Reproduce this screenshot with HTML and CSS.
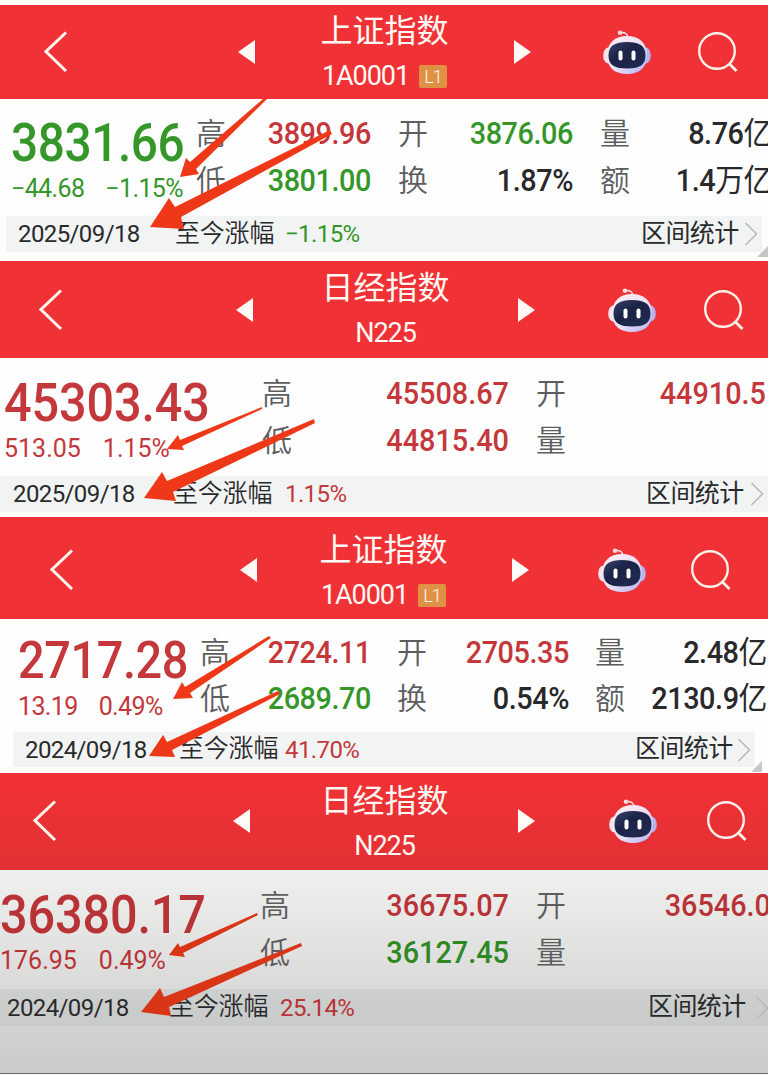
FILE: index.html
```
<!DOCTYPE html>
<html lang="zh-CN">
  <head>
    <meta charset="UTF-8" />
    <meta name="viewport" content="width=device-width, initial-scale=1.0" />
    <title>指数对比</title>
    <link rel="stylesheet" href="styles.css">
  </head>
  <body>
    <!-- shared icons -->
    <svg class="defs" width="0" height="0">
      <defs>
        <linearGradient id="shell" x1="0" y1="0" x2="1" y2="1">
          <stop offset="0" stop-color="#fff0f3" />
          <stop offset="0.55" stop-color="#eadff5" />
          <stop offset="1" stop-color="#aeb0f5" />
        </linearGradient>
        <linearGradient id="face" x1="0" y1="0" x2="1" y2="1">
          <stop offset="0" stop-color="#39436b" />
          <stop offset="0.4" stop-color="#1b2447" />
          <stop offset="1" stop-color="#212a50" />
        </linearGradient>
      </defs>
      <symbol id="icon-back" viewBox="0 0 24 42">
        <path d="M22 1.5 2 20.5 22 40" fill="none" stroke="#fff5ee" stroke-width="3" />
      </symbol>
      <symbol id="icon-prev" viewBox="0 0 17 24">
        <path d="M17 0v24L0 12z" fill="#fffaf5" />
      </symbol>
      <symbol id="icon-next" viewBox="0 0 17 24">
        <path d="M0 0v24l17-12z" fill="#fffaf5" />
      </symbol>
      <symbol id="icon-robot" viewBox="0 0 48 44">
        <path d="M17 2.5c5-.5 7.500 1 8 5" fill="none" stroke="#ffe1e4" stroke-width="1.500" />
        <circle cx="17" cy="2.800" r="2.300" fill="#ffd9dc" />
        <ellipse cx="5.500" cy="25.500" rx="5.300" ry="8" fill="#f6e4ec" />
        <ellipse cx="42.500" cy="25.500" rx="5.300" ry="8" fill="#b9b0ee" />
        <path d="M24 6c12 0 20 7 20 19 0 13-8 19-20 19S4 38 4 25C4 13 12 6 24 6z" fill="url(#shell)" />
        <path d="M24 12c12 0 18.500 3.500 18.500 13.500S36 38.500 24 38.500 5.500 35.500 5.500 25.500 12 12 24 12z" fill="url(#face)" />
        <rect x="15.500" y="20.500" width="4" height="10" rx="2" fill="#fff" />
        <rect x="28.500" y="20.500" width="4" height="10" rx="2" fill="#fff" />
      </symbol>
      <symbol id="icon-search" viewBox="0 0 40 40">
        <circle cx="19" cy="19" r="17.800" fill="none" stroke="#fff1e8" stroke-width="2.400" />
        <path d="M31.500 32l7 7" stroke="#fff1e8" stroke-width="2.800" />
      </symbol>
      <symbol id="icon-more" viewBox="0 0 14 24">
        <path d="M1.500 1 12.500 12 1.500 23" fill="none" stroke="#b9bbbb" stroke-width="1.600" />
      </symbol>
    </svg>

    <section class="panel sse-2025">
      <header class="bar">
        <svg class="back"><use href="#icon-back" /></svg>
        <svg class="step"><use href="#icon-prev" /></svg>
        <div class="title">
          <h2>上证指数</h2>
          <p>1A0001 <span class="level">L1</span></p>
        </div>
        <svg class="step"><use href="#icon-next" /></svg>
        <svg class="robot"><use href="#icon-robot" /></svg>
        <svg class="search"><use href="#icon-search" /></svg>
      </header>
      <div class="quote">
        <div class="summary down">
          <div class="price">3831.66</div>
          <div class="change"><span>−44.68</span><span>−1.15%</span></div>
        </div>
        <span class="label">高</span><span class="value up">3899.96</span>
        <span class="label next">开</span><span class="value down">3876.06</span>
        <span class="label next">量</span><span class="value">8.76<small>亿</small></span>
        <span class="label">低</span><span class="value down">3801.00</span>
        <span class="label next">换</span><span class="value">1.87%</span>
        <span class="label next">额</span><span class="value">1.4<small>万亿</small></span>
      </div>
      <div class="range">
        <span class="date">2025/09/18</span>
        <span class="since">至今涨幅</span>
        <span class="rate down">−1.15%</span>
        <span class="stats">区间统计</span>
        <svg class="more"><use href="#icon-more" /></svg>
      </div>
      <i class="corner"></i>
    </section>

    <section class="panel nikkei nikkei-2025">
      <header class="bar">
        <svg class="back"><use href="#icon-back" /></svg>
        <svg class="step"><use href="#icon-prev" /></svg>
        <div class="title">
          <h2>日经指数</h2>
          <p>N225</p>
        </div>
        <svg class="step"><use href="#icon-next" /></svg>
        <svg class="robot"><use href="#icon-robot" /></svg>
        <svg class="search"><use href="#icon-search" /></svg>
      </header>
      <div class="quote">
        <div class="summary up">
          <div class="price">45303.43</div>
          <div class="change"><span>513.05</span><span>1.15%</span></div>
        </div>
        <span class="label">高</span><span class="value up">45508.67</span>
        <span class="label next">开</span><span class="value up">44910.5</span>
        <span class="label">低</span><span class="value up">44815.40</span>
        <span class="label next">量</span><span class="value"></span>
      </div>
      <div class="range">
        <span class="date">2025/09/18</span>
        <span class="since">至今涨幅</span>
        <span class="rate up">1.15%</span>
        <span class="stats">区间统计</span>
        <svg class="more"><use href="#icon-more" /></svg>
      </div>
    </section>

    <section class="panel sse-2024">
      <header class="bar">
        <svg class="back"><use href="#icon-back" /></svg>
        <svg class="step"><use href="#icon-prev" /></svg>
        <div class="title">
          <h2>上证指数</h2>
          <p>1A0001 <span class="level">L1</span></p>
        </div>
        <svg class="step"><use href="#icon-next" /></svg>
        <svg class="robot"><use href="#icon-robot" /></svg>
        <svg class="search"><use href="#icon-search" /></svg>
      </header>
      <div class="quote">
        <div class="summary up">
          <div class="price">2717.28</div>
          <div class="change"><span>13.19</span><span>0.49%</span></div>
        </div>
        <span class="label">高</span><span class="value up">2724.11</span>
        <span class="label next">开</span><span class="value up">2705.35</span>
        <span class="label next">量</span><span class="value">2.48<small>亿</small></span>
        <span class="label">低</span><span class="value down">2689.70</span>
        <span class="label next">换</span><span class="value">0.54%</span>
        <span class="label next">额</span><span class="value">2130.9<small>亿</small></span>
      </div>
      <div class="range">
        <span class="date">2024/09/18</span>
        <span class="since">至今涨幅</span>
        <span class="rate up">41.70%</span>
        <span class="stats">区间统计</span>
        <svg class="more"><use href="#icon-more" /></svg>
      </div>
      <i class="corner"></i>
    </section>

    <section class="panel nikkei nikkei-2024">
      <header class="bar">
        <svg class="back"><use href="#icon-back" /></svg>
        <svg class="step"><use href="#icon-prev" /></svg>
        <div class="title">
          <h2>日经指数</h2>
          <p>N225</p>
        </div>
        <svg class="step"><use href="#icon-next" /></svg>
        <svg class="robot"><use href="#icon-robot" /></svg>
        <svg class="search"><use href="#icon-search" /></svg>
      </header>
      <div class="quote">
        <div class="summary up">
          <div class="price">36380.17</div>
          <div class="change"><span>176.95</span><span>0.49%</span></div>
        </div>
        <span class="label">高</span><span class="value up">36675.07</span>
        <span class="label next">开</span><span class="value up">36546.0</span>
        <span class="label">低</span><span class="value down">36127.45</span>
        <span class="label next">量</span><span class="value"></span>
      </div>
      <div class="range">
        <span class="date">2024/09/18</span>
        <span class="since">至今涨幅</span>
        <span class="rate up">25.14%</span>
        <span class="stats">区间统计</span>
        <svg class="more"><use href="#icon-more" /></svg>
      </div>
    </section>

    <!-- hand-drawn arrows over the quotes -->
    <svg class="arrows" viewBox="0 0 768 1075">
      <path d="M180 177 186 158 190 162 263 99 267 99 196 169 199 174z" />
      <path d="M150 227 169 198 175 207 330 130 332 134 181 217 184 229z" />
      <path d="M167 449 178 435 180 440 262 407 262 409 182 446 184 450z" />
      <path d="M144 498 162 472 167 481 314 419 315 423 173 492 176 501z" />
      <path d="M173 699 182 682 185 687 269 636 271 638 190 693 193 698z" />
      <path d="M149 756 163 735 167 742 278 691 280 694 172 750 175 757z" />
      <g class="dim">
        <path d="M169 955 178 943 180 947 257 913 258 915 183 953 185 957z" />
        <path d="M141 1012 160 988 164 997 301 943 302 946 169 1007 171 1016z" />
      </g>
    </svg>
  </body>
</html>
```
FILE: styles.css
```
* {
  box-sizing: border-box;
}
body {
  position: relative;
  width: 768px;
  height: 1075px;
  margin: 0;
  padding-top: 5px;
  overflow: hidden;
  background: #fefefe;
  color: #29292b;
  font-family: Roboto, "Noto Sans CJK SC", sans-serif;
  white-space: nowrap;
}
.defs {
  position: absolute;
}
svg {
  display: block;
}
.panel {
  position: relative;
  height: 256px;
  overflow: hidden;
}
.up {
  color: #c4373b;
}
.down {
  color: #35962a;
}

/* red title bar */
.bar {
  display: grid;
  align-items: center;
  height: 97px;
  background: #f03236;
  color: #fff8f3;
}
.back {
  width: 24px;
  height: 42px;
}
.step {
  width: 17px;
  height: 24px;
}
.robot {
  width: 48px;
  height: 44px;
}
.search {
  width: 40px;
  height: 40px;
}
.title {
  width: 129px;
  padding-top: 2px;
  text-align: center;
}
.title h2 {
  margin: 0;
  font-size: 32px;
  font-weight: 400;
  line-height: 46px;
}
.title p {
  display: flex;
  justify-content: center;
  align-items: center;
  gap: 10px;
  margin: 0;
  font-size: 27px;
  line-height: 45px;
  letter-spacing: -0.04em;
}
.level {
  width: 28px;
  height: 23px;
  border-radius: 2px;
  background: #df9145;
  font-size: 18px;
  font-weight: 300;
  line-height: 24px;
}

/* prices */
.quote {
  display: grid;
  align-content: start;
  height: 118px;
  grid-auto-rows: 47px;
  line-height: 47px;
}
.summary {
  grid-row: span 2;
}
.price {
  font-size: 53px;
  font-weight: 500;
  line-height: 56px;
  letter-spacing: -0.008em;
  transform: scaleX(0.9);
  transform-origin: left;
}
.change {
  display: flex;
  gap: 21px;
  margin-top: 4px;
  font-size: 25px;
  line-height: 30px;
  letter-spacing: -0.025em;
}
.label {
  color: #5d5d60;
  font-size: 30px;
  font-weight: 350;
}
.next {
  padding-left: 27px;
}
.value {
  font-size: 31px;
  font-weight: 500;
  letter-spacing: -0.015em;
  text-align: right;
  transform: scaleX(0.93);
  transform-origin: right;
}
.value small {
  font-size: 31px;
  font-weight: 400;
}

/* date range strip */
.range {
  display: grid;
  align-items: center;
  height: 36px;
  background: #f2f3f3;
  font-size: 24px;
  letter-spacing: -0.025em;
}
.since,
.stats {
  padding-bottom: 1px;
  font-size: 25px;
  line-height: 32px;
  letter-spacing: -0.2px;
}
.since {
  font-weight: 350;
}
.stats {
  letter-spacing: -0.6px;
}
.more {
  width: 14px;
  height: 24px;
}
.corner {
  position: absolute;
  right: 0;
  bottom: 4px;
  border-left: 11px solid transparent;
  border-bottom: 11px solid #c6c7c7;
}

.sse-2025 .bar {
  height: 94px;
  padding-left: 44px;
  grid-template-columns: 194px 82px 194px 89px 95px 40px;
}
.sse-2025 .quote {
  height: 117px;
  padding: 11px 0 0 11px;
  grid-template-columns: 185px 30px 145px 57px 145px 57px 142px;
}
.sse-2025 .summary {
  padding-top: 5px;
}
.sse-2025 .change {
  margin-top: 3px;
}
.sse-2025 .range {
  margin: 0 6px;
  padding-left: 12px;
  grid-template-columns: 157px 110px 356px 103px 14px;
}

.nikkei-2025 .bar {
  padding-left: 39px;
  grid-template-columns: 197px 85px 197px 90px 96px 40px;
}
.nikkei-2025 .quote {
  padding: 12px 0 0 4px;
  grid-template-columns: 258px 30px 217px 57px 200px;
}
.nikkei .price {
  margin-top: 5px;
  font-size: 54px;
  letter-spacing: -0.003em;
}
.nikkei .value {
  letter-spacing: 0;
}
.nikkei .change {
  margin-top: 3px;
  gap: 22px;
  letter-spacing: 0;
}
.nikkei-2025 .range {
  padding-left: 13px;
  grid-template-columns: 160px 112px 361px 104px 14px;
}

.sse-2024 .bar {
  height: 102px;
  padding: 4px 0 0 50px;
  grid-template-columns: 190px 79px 193px 86px 93px 40px;
}
.sse-2024 .title {
  padding-top: 5px;
}
.sse-2024 .quote {
  height: 113px;
  padding: 11px 0 0 18px;
  grid-template-columns: 182px 30px 141px 57px 141px 53px 145px;
  grid-auto-rows: 46px;
  line-height: 46px;
}
.sse-2024 .next {
  padding-left: 26px;
}
.sse-2024 .price {
  font-size: 52px;
  margin-top: 3px;
}
.sse-2024 .change {
  margin-top: 3px;
}
.sse-2024 .range {
  margin: 0 13px;
  padding-left: 12px;
  height: 35px;
  grid-template-columns: 154px 106px 350px 102px 14px;
}
.sse-2024 .corner {
  right: 6px;
  bottom: 1px;
}

.nikkei-2024 {
  height: 301px;
  background: linear-gradient(#f0f0ef 97px, #cacaca);
  border-bottom: 1px solid #67646a;
}
.nikkei-2024 .bar {
  padding: 0 0 4px 33px;
  background: linear-gradient(#f13236, #e33034);
  grid-template-columns: 200px 87px 198px 91px 98px 40px;
}
.nikkei-2024 .title {
  padding-top: 5px;
}
.nikkei-2024 .quote {
  height: 119px;
  padding-top: 12px;
  grid-template-columns: 260px 30px 219px 57px 205px;
}
.nikkei-2024 .up {
  color: #b83336;
}
.nikkei-2024 .down {
  color: #2f8823;
}
.nikkei-2024 .range {
  height: 37px;
  padding-left: 7px;
  background: rgba(170, 178, 174, 0.25);
  grid-template-columns: 162px 111px 368px 107px 14px;
}

.arrows {
  position: absolute;
  top: 0;
  left: 0;
  width: 768px;
  height: 1075px;
  fill: #ee3817;
}
.dim {
  fill: #d93517;
}
```
